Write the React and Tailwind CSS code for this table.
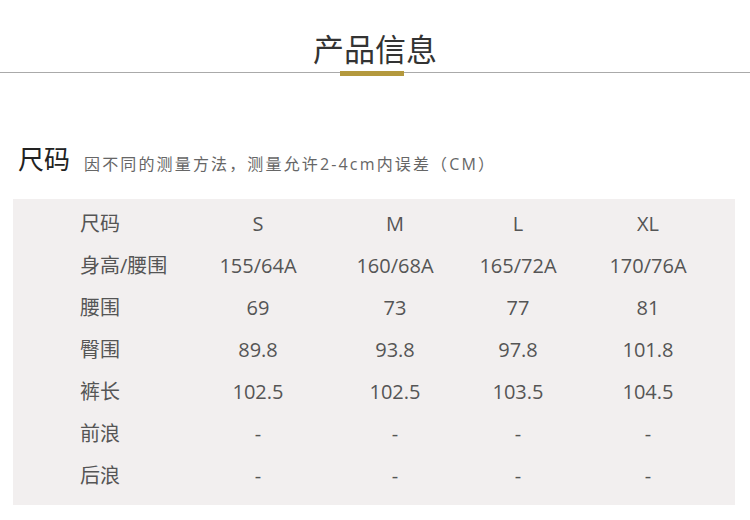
import React from 'react';

const rows = [
  ['尺码', 'S', 'M', 'L', 'XL'],
  ['身高/腰围', '155/64A', '160/68A', '165/72A', '170/76A'],
  ['腰围', '69', '73', '77', '81'],
  ['臀围', '89.8', '93.8', '97.8', '101.8'],
  ['裤长', '102.5', '102.5', '103.5', '104.5'],
  ['前浪', '-', '-', '-', '-'],
  ['后浪', '-', '-', '-', '-'],
];

const App = () => {
  return (
    <div className="w-[750px] h-[520px] bg-white overflow-hidden" style={{ fontFamily: '"Open Sans", "Noto Sans CJK SC", sans-serif' }}>
      <div className="relative h-[74px]">
        <div className="pt-[29px] text-center text-[31px] leading-[40px] text-[#333]">产品信息</div>
        <div className="absolute left-0 right-0 top-[72px] h-px bg-[#aaa]"></div>
        <div className="absolute left-[340px] top-[71px] w-[64px] h-[5px] bg-[#b4993d]"></div>
      </div>
      <div className="flex items-end pl-[18px] mt-[68px] h-[34px]">
        <span className="text-[26px] leading-[34px] text-[#222]">尺码</span>
        <span className="ml-[14px] text-[16px] leading-[24px] tracking-[2.15px] text-[#666]">因不同的测量方法，测量允许2-4cm内误差（CM）</span>
      </div>
      <div className="mx-[13px] mt-[23px] w-[722px] h-[306px] bg-[#f2efef] pt-[4px] pl-[67px]">
        {rows.map((r, i) => (
          <div key={i} className="grid grid-cols-[110px_136px_138px_108px_152px] h-[42px] items-center text-[20px] text-[#555]">
            <div>{r[0]}</div>
            <div className="text-center">{r[1]}</div>
            <div className="text-center">{r[2]}</div>
            <div className="text-center">{r[3]}</div>
            <div className="text-center">{r[4]}</div>
          </div>
        ))}
      </div>
    </div>
  );
};

export default App;
